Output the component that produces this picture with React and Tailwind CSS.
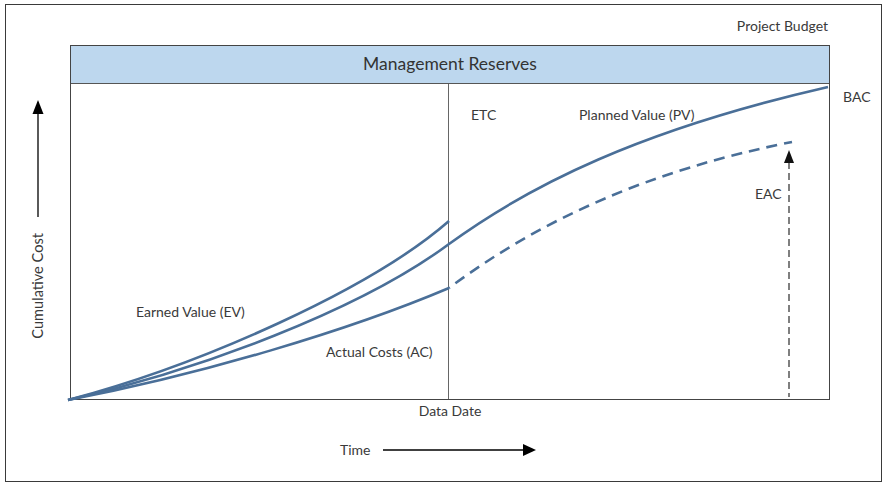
import React from "react";

const font = { fontFamily: "Lato, 'Liberation Sans', sans-serif" };

const Label = ({ className, children }) => (
  <span className={`absolute whitespace-nowrap text-[14px] leading-[16px] text-[#3a3a3a] ${className}`}>
    {children}
  </span>
);

const Curves = () => (
  <svg
    className="absolute inset-0 pointer-events-none"
    width="886"
    height="486"
    viewBox="0 0 886 486"
    fill="none"
  >
    {/* earned value */}
    <path d="M68,400 C200,365 370,290 449,221" stroke="#4a6f98" strokeWidth="2.6" />
    {/* planned value */}
    <path d="M68,400 C200,370 360,310 449,244 C530,185 640,130 828,87" stroke="#4a6f98" strokeWidth="2.6" />
    {/* actual costs */}
    <path d="M68,400 C200,375 350,330 449,288" stroke="#4a6f98" strokeWidth="2.6" />
    {/* forecast */}
    <path
      d="M449,288 C540,220 650,170 792,142"
      stroke="#4a6f98"
      strokeWidth="2.6"
      strokeDasharray="11 7"
      strokeDashoffset="-8"
    />
    {/* EAC arrow */}
    <line x1="789" y1="162" x2="789" y2="397" stroke="#555" strokeWidth="1.5" strokeDasharray="7 4" />
    <polygon points="789,150 784,163 794,163" fill="#111" />
  </svg>
);

export default function App() {
  return (
    <div className="relative w-[886px] h-[486px] bg-white pt-[4px] pl-[5px]" style={font}>
      <div className="w-[877px] h-[478px] border border-[#3a3a3a] flex flex-col">
        <div className="h-[40px] pl-[64px] flex">
          <div className="w-[760px] flex justify-end items-center pt-[2px] pr-[2px]">
            <span className="text-[14px] leading-[16px] text-[#3a3a3a]">Project Budget</span>
          </div>
        </div>

        <div className="flex">
          <div className="w-[64px] flex flex-col items-center pt-[55px]">
            <svg width="14" height="118" viewBox="0 0 14 118">
              <polygon points="7,0 1.5,14 12.5,14" fill="#000" />
              <line x1="7" y1="12" x2="7" y2="117" stroke="#000" strokeWidth="1.3" />
            </svg>
            <span className="mt-[15px] [writing-mode:vertical-rl] rotate-180 text-[14.6px] leading-[16px] text-[#3a3a3a] whitespace-nowrap">
              Cumulative Cost
            </span>
          </div>

          <div className="w-[760px] border-[1.5px] border-[#444]">
            <div className="h-[38px] bg-[#bdd7ee] border-b-[1.5px] border-[#555] flex items-center justify-center">
              <span className="text-[17.5px] text-[#333]">Management Reserves</span>
            </div>
            <div className="relative h-[315px]">
              <div className="absolute left-[377px] top-0 bottom-0 w-px bg-[#666]" />
              <Label className="left-[400px] top-[23px]">ETC</Label>
              <Label className="left-[508px] top-[23px]">Planned Value (PV)</Label>
              <Label className="left-[684px] top-[102px]">EAC</Label>
              <Label className="left-[65px] top-[220px]">Earned Value (EV)</Label>
              <Label className="left-[255px] top-[260px]">Actual Costs (AC)</Label>
            </div>
          </div>

          <div className="flex-1 pl-[13px] pt-[39px]">
            <span className="text-[14px] leading-[16px] text-[#3a3a3a]">BAC</span>
          </div>
        </div>

        <div className="pl-[64px]">
          <div className="w-[760px] mt-[3px] text-center text-[14px] leading-[16px] text-[#3a3a3a]">
            Data Date
          </div>
        </div>

        <div className="mt-[23px] ml-[334px] flex items-center">
          <span className="w-[43px] shrink-0 text-[14px] leading-[16px] text-[#3a3a3a]">Time</span>
          <svg width="154" height="14" viewBox="0 0 154 14" className="shrink-0">
            <line x1="0" y1="7" x2="142" y2="7" stroke="#000" strokeWidth="1.3" />
            <polygon points="140,1 153,7 140,13" fill="#000" />
          </svg>
        </div>
      </div>
      <Curves />
    </div>
  );
}
